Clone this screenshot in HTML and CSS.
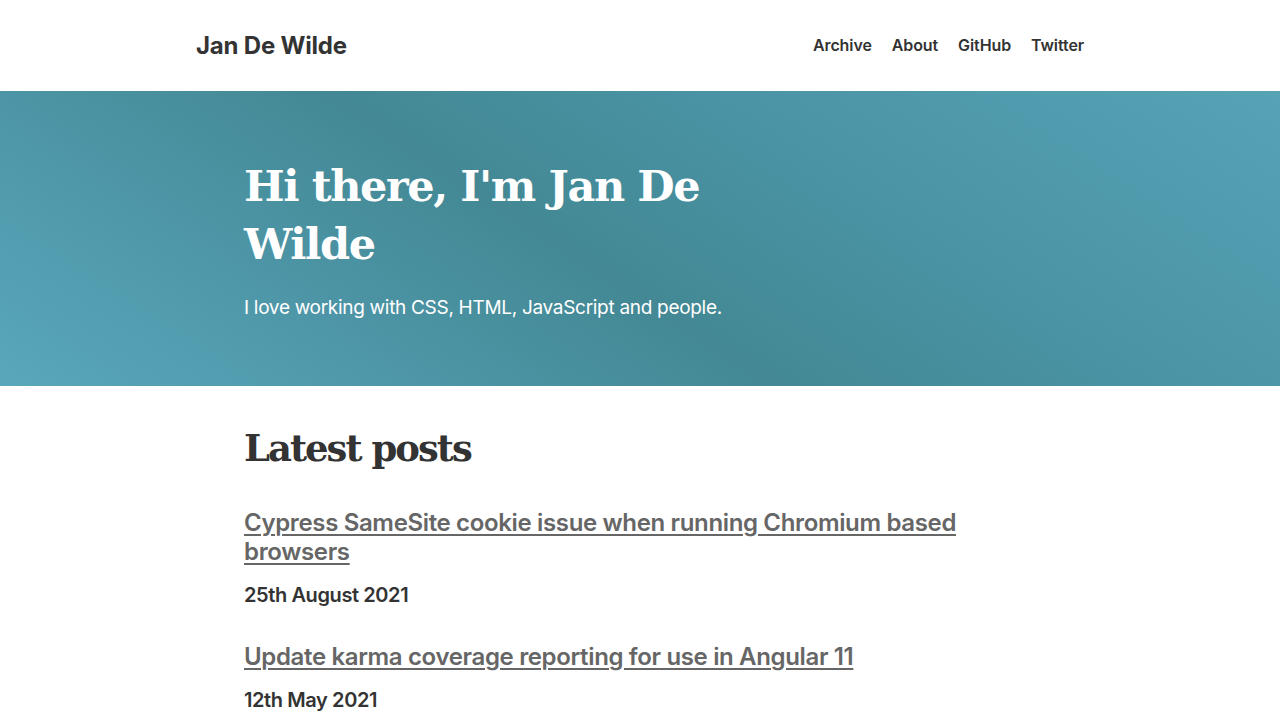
FILE: index.html
```html
<!DOCTYPE html>
<html lang="en">
<head>
<meta charset="utf-8">
<title>Jan De Wilde</title>
<link rel="stylesheet" href="styles.css">
</head>
<body>
<header class="site-header">
  <div class="header-inner">
    <a class="brand" href="#">Jan De Wilde</a>
    <nav class="nav">
      <a href="#">Archive</a>
      <a href="#">About</a>
      <a href="#">GitHub</a>
      <a href="#">Twitter</a>
    </nav>
  </div>
</header>
<section class="hero">
  <div class="container">
    <h1 class="hero-title">Hi there, I'm Jan De Wilde</h1>
    <p class="hero-sub">I love working with CSS, HTML, JavaScript and people.</p>
  </div>
</section>
<main class="container posts">
  <h2 class="posts-title">Latest posts</h2>
  <article class="post">
    <a class="post-link" href="#">Cypress SameSite cookie issue when running Chromium based browsers</a>
    <p class="post-date">25th August 2021</p>
  </article>
  <article class="post">
    <a class="post-link" href="#">Update karma coverage reporting for use in Angular 11</a>
    <p class="post-date">12th May 2021</p>
  </article>
</main>
</body>
</html>
```
FILE: styles.css
```css
* { box-sizing: border-box; }
body {
  margin: 0;
  font-family: Inter, "Noto Sans", sans-serif;
  color: #333;
  background: #fff;
}
a { color: inherit; text-decoration: none; }

.site-header { height: 91px; }
.header-inner {
  width: 888px;
  margin: 0 auto;
  height: 100%;
  display: flex;
  align-items: center;
  justify-content: space-between;
  padding-bottom: 1px;
}
.brand {
  font-size: 24px;
  font-weight: 700;
  letter-spacing: -0.2px;
  color: #333;
}
.nav { display: flex; gap: 20px; }
.nav a { font-size: 16px; font-weight: 600; color: #333; letter-spacing: -0.1px; }

.hero {
  height: 295px;
  background: linear-gradient(33deg, #59a7ba 0%, #4f98aa 22%, #438894 45%, #4a94a6 68%, #57a2b5 100%);
  color: #fff;
  padding-top: 66px;
}
.container { width: 792px; margin: 0 auto; }
.hero-title {
  margin: 0;
  max-width: 560px;
  font-family: "DejaVu Serif", serif;
  font-weight: 700;
  font-size: 43px;
  line-height: 58px;
  letter-spacing: -1.4px;
}
.hero-sub {
  margin: 21px 0 0;
  font-size: 19px;
  line-height: 28px;
  letter-spacing: -0.3px;
}

.posts { padding-top: 34px; }
.posts-title {
  margin: 0 0 32px;
  font-family: "DejaVu Serif", serif;
  font-weight: 700;
  font-size: 37px;
  line-height: 56px;
  letter-spacing: -2px;
}
.post { margin-bottom: 34px; }
.post-link {
  display: block;
  font-size: 24px;
  font-weight: 600;
  line-height: 29px;
  color: #666;
  text-decoration: underline;
  text-underline-offset: 3px;
  text-decoration-thickness: 2px;
  letter-spacing: -0.35px;
  max-width: 740px;
}
.post-date {
  margin: 16px 0 0;
  font-size: 20px;
  font-weight: 600;
  line-height: 26px;
  letter-spacing: -0.4px;
}
```
